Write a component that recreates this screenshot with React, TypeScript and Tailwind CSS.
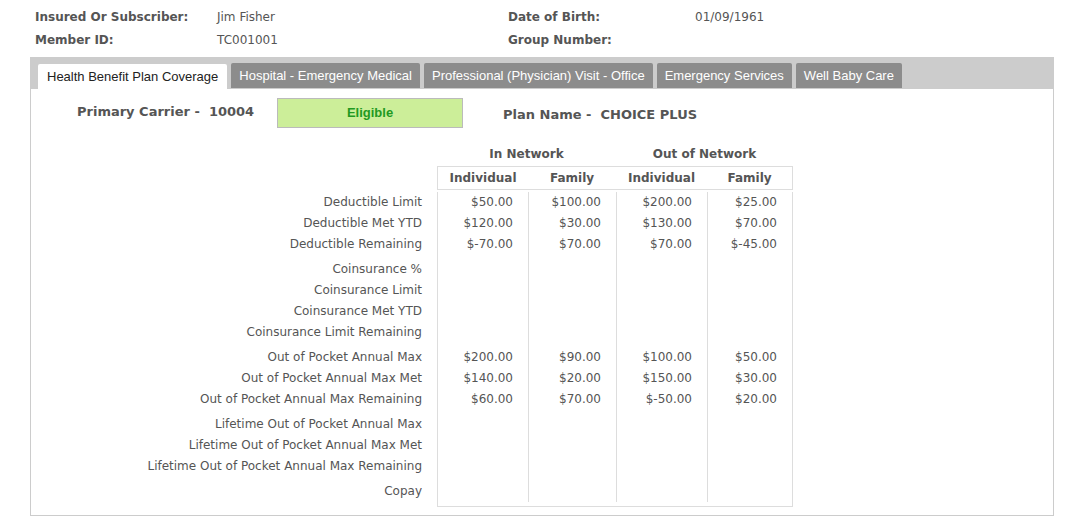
import React from "react";

const V = { fontFamily: '"DejaVu Sans", Verdana, sans-serif' };
const A = { fontFamily: '"Liberation Sans", Arial, sans-serif' };

type Row = { l: string; v?: string[] } | "gap";
const rows: Row[] = [
  { l: "Deductible Limit", v: ["$50.00", "$100.00", "$200.00", "$25.00"] },
  { l: "Deductible Met YTD", v: ["$120.00", "$30.00", "$130.00", "$70.00"] },
  { l: "Deductible Remaining", v: ["$-70.00", "$70.00", "$70.00", "$-45.00"] },
  "gap",
  { l: "Coinsurance %" },
  { l: "Coinsurance Limit" },
  { l: "Coinsurance Met YTD" },
  { l: "Coinsurance Limit Remaining" },
  "gap",
  { l: "Out of Pocket Annual Max", v: ["$200.00", "$90.00", "$100.00", "$50.00"] },
  { l: "Out of Pocket Annual Max Met", v: ["$140.00", "$20.00", "$150.00", "$30.00"] },
  { l: "Out of Pocket Annual Max Remaining", v: ["$60.00", "$70.00", "$-50.00", "$20.00"] },
  "gap",
  { l: "Lifetime Out of Pocket Annual Max" },
  { l: "Lifetime Out of Pocket Annual Max Met" },
  { l: "Lifetime Out of Pocket Annual Max Remaining" },
  "gap",
  { l: "Copay" },
];

const grid = "grid grid-cols-[406px_91px_88px_91px_86px]";
const cell = "border-l border-[#ddd] text-right pr-[15px]";

export default function App() {
  return (
    <div className="w-[1069px] h-[522px] bg-white text-[#555] overflow-hidden" style={V}>
      <div className="pt-[5px] text-[12px]">
        <div className="flex h-[23px] items-center">
          <div className="w-[217px] pl-[35px] font-bold">Insured Or Subscriber:</div>
          <div className="w-[291px]">Jim Fisher</div>
          <div className="w-[187px] font-bold">Date of Birth:</div>
          <div>01/09/1961</div>
        </div>
        <div className="flex h-[23px] items-center">
          <div className="w-[217px] pl-[35px] font-bold">Member ID:</div>
          <div className="w-[291px]">TC001001</div>
          <div className="w-[187px] font-bold">Group Number:</div>
          <div></div>
        </div>
      </div>
      <div className="ml-[30px] mt-[6px] w-[1024px] h-[459px] border border-[#ccc]">
        <div className="bg-[#cccccc] h-[31px] flex items-end gap-[4px] pl-[7px]" style={A}>
          <div className="h-[25px] px-[9px] bg-white text-[#222] text-[13px] flex items-center rounded-t-[2px]">Health Benefit Plan Coverage</div>
          {["Hospital - Emergency Medical", "Professional (Physician) Visit - Office", "Emergency Services", "Well Baby Care"].map((t) => (
            <div key={t} className="h-[25px] px-[8px] bg-[#8c8c8c] text-white text-[13px] flex items-center rounded-t-[2px] mb-[1px]">{t}</div>
          ))}
        </div>
        <div className="flex items-start pt-[9px] text-[13px] font-bold">
          <div className="w-[246px] pl-[46px] pt-[4px]">Primary Carrier -&nbsp;&nbsp;10004</div>
          <div className="w-[186px] h-[30px] bg-[#ccee99] border border-[#bbb] flex items-center justify-center text-[#229922] text-[13px]" style={A}>Eligible</div>
          <div className="pl-[40px] pt-[7px]">Plan Name -&nbsp;&nbsp;CHOICE PLUS</div>
        </div>
        <div className="mt-[14px] text-[12px]">
          <div className={`${grid} h-[24px] items-center font-bold`}>
            <div></div>
            <div className="col-span-2 text-center">In Network</div>
            <div className="col-span-2 text-center">Out of Network</div>
          </div>
          <div className={`${grid} h-[24px]`}>
            <div></div>
            {["Individual", "Family", "Individual", "Family"].map((h, i) => (
              <div key={i} className={`border-t border-b ${i === 0 ? "border-l" : ""} ${i === 3 ? "border-r" : ""} border-[#ddd] font-bold flex items-center justify-center`}>{h}</div>
            ))}
          </div>
          <div className="h-[2px]" />
          {rows.map((r, i) =>
            r === "gap" ? (
              <div key={i} className={`${grid} h-[4px]`}>
                <div></div>
                <div className="border-l border-[#ddd]" /><div className="border-l border-[#ddd]" /><div className="border-l border-[#ddd]" /><div className="border-l border-r border-[#ddd]" />
              </div>
            ) : (
              <div key={i} className={`${grid} h-[21px] items-stretch`}>
                <div className="text-right pr-[15px] leading-[21px]">{r.l}</div>
                {[0, 1, 2, 3].map((j) => (
                  <div key={j} className={`${cell} ${j === 3 ? "border-r" : ""} leading-[21px]`}>{r.v ? r.v[j] : ""}</div>
                ))}
              </div>
            )
          )}
          <div className={`${grid} h-[5px]`}>
            <div></div>
            <div className="col-span-4 border-l border-r border-b border-[#ddd]" />
          </div>
        </div>
      </div>
    </div>
  );
}
